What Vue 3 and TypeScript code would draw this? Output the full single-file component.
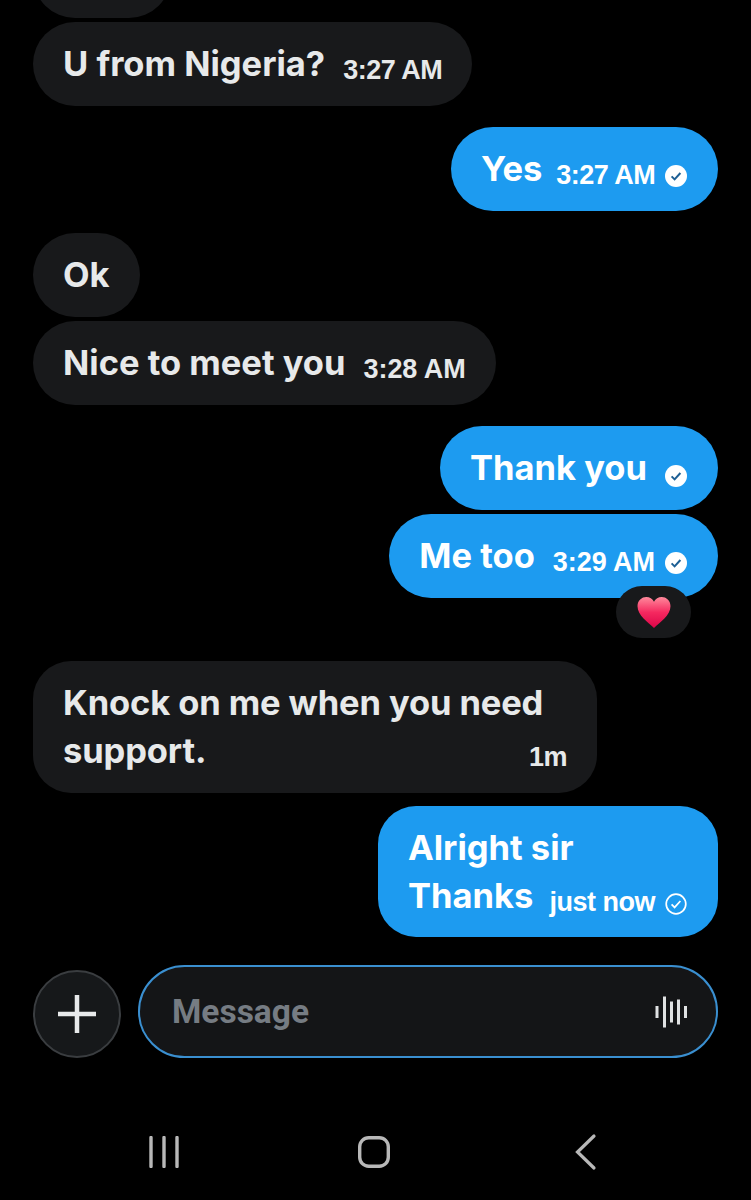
<script setup lang="ts">
interface Message {
  id: number;
  side: 'in' | 'out';
  lines: string[];
  time?: string;
  check?: 'read' | 'sent';
  cls?: string;
  reaction?: boolean;
}

const messages: Message[] = [
  { id: 0, side: 'in', lines: ['\u00a0'], cls: 'cut' },
  { id: 1, side: 'in', lines: ['U from Nigeria?'], time: '3:27 AM' },
  { id: 2, side: 'out', lines: ['Yes'], time: '3:27 AM', check: 'read', cls: 'new-group yes' },
  { id: 3, side: 'in', lines: ['Ok'], cls: 'new-group ok' },
  { id: 4, side: 'in', lines: ['Nice to meet you'], time: '3:28 AM', cls: 'wide' },
  { id: 5, side: 'out', lines: ['Thank you'], check: 'read', cls: 'new-group' },
  { id: 6, side: 'out', lines: ['Me too'], time: '3:29 AM', check: 'read', reaction: true, cls: 'wide' },
  { id: 7, side: 'in', lines: ['Knock on me when you need', 'support.'], time: '1m', cls: 'knock' },
  { id: 8, side: 'out', lines: ['Alright sir', 'Thanks'], time: 'just now', check: 'sent', cls: 'alright' },
];

const wave = [
  { x: 2, h: 12 },
  { x: 9.5, h: 31 },
  { x: 16.5, h: 21 },
  { x: 23.5, h: 25 },
  { x: 30.5, h: 12 },
];
</script>

<template>
  <div class="screen">
    <div class="thread">
      <div
        v-for="m in messages"
        :key="m.id"
        class="bubble"
        :class="[m.side, m.cls, { multi: m.lines.length > 1 }]"
      >
        <div v-if="m.lines.length > 1" class="first-line">{{ m.lines[0] }}</div>
        <div class="last-line">
          <span class="text">{{ m.lines[m.lines.length - 1] }}</span>
          <span v-if="m.time || m.check" class="meta">
            <span v-if="m.time" class="time">{{ m.time }}</span>
            <svg v-if="m.check === 'read'" class="check" viewBox="0 0 22 22">
              <circle cx="11" cy="11" r="11" fill="#fff" />
              <path d="M6.6 11.4l3 3 5.8-6.4" fill="none" stroke="#1d5f94" stroke-width="2" />
            </svg>
            <svg v-if="m.check === 'sent'" class="check" viewBox="0 0 22 22">
              <circle cx="11" cy="11" r="9.8" fill="none" stroke="#fff" stroke-width="1.7" />
              <path d="M6.6 11.4l3 3 5.8-6.4" fill="none" stroke="#fff" stroke-width="1.7" />
            </svg>
          </span>
        </div>
        <div v-if="m.reaction" class="reaction">
          <svg width="36" height="33" viewBox="0 0 36 34">
            <defs>
              <linearGradient id="heart" x1="0" y1="0" x2="0" y2="1">
                <stop offset="0" stop-color="#ff8a9c" />
                <stop offset="0.5" stop-color="#f5285f" />
                <stop offset="1" stop-color="#dc0548" />
              </linearGradient>
            </defs>
            <path
              d="M18 33C12 27 1 20 1 10.500C1 4.500 5.500 1 10 1C13.500 1 16.500 3 18 6C19.500 3 22.500 1 26 1C30.500 1 35 4.500 35 10.500C35 20 24 27 18 33Z"
              fill="url(#heart)"
            />
          </svg>
        </div>
      </div>
    </div>

    <div class="composer">
      <button class="plus" type="button">
        <svg width="40" height="40" viewBox="0 0 40 40">
          <path d="M20 1v38M1 20h38" stroke="#e7e9ea" stroke-width="4.500" />
        </svg>
      </button>
      <div class="input">
        <span class="placeholder">Message</span>
        <svg width="33" height="32" viewBox="0 0 33 32">
          <rect
            v-for="b in wave"
            :key="b.x"
            :x="b.x - 1.5"
            :y="16 - b.h / 2"
            width="3"
            :height="b.h"
            fill="#e0e2e3"
          />
        </svg>
      </div>
    </div>

    <div class="navbar">
      <svg width="32" height="32" viewBox="0 0 32 32">
        <path d="M3 1.500v29M16 1.500v29M29 1.500v29" stroke="#b8b8b8" stroke-width="3.400" stroke-linecap="round" />
      </svg>
      <svg width="32" height="32" viewBox="0 0 32 32">
        <rect x="1.700" y="1.700" width="28.600" height="28.600" rx="9" fill="none" stroke="#b8b8b8" stroke-width="3.400" />
      </svg>
      <svg width="30" height="38" viewBox="0 0 30 38">
        <path d="M26 3L9.500 19 26 35" fill="none" stroke="#b8b8b8" stroke-width="3.200" stroke-linecap="round" />
      </svg>
    </div>
  </div>
</template>

<style scoped>
.screen {
  width: 751px;
  height: 1200px;
  background: #000;
  overflow: hidden;
  font-family: Inter, "Liberation Sans", sans-serif;
  display: flex;
  flex-direction: column;
}

.thread {
  display: flex;
  flex-direction: column;
  gap: 4px;
  padding: 0 33px;
}

.bubble {
  position: relative;
  box-sizing: border-box;
  height: 84px;
  padding: 0 30px 2px 30px;
  border-radius: 42px;
  display: flex;
  flex-direction: column;
  justify-content: center;
  font-size: 34.5px;
  font-weight: 700;
  white-space: nowrap;
}

.in {
  align-self: flex-start;
  background: #18191b;
  color: #e7e9ea;
}

.out {
  align-self: flex-end;
  background: #1d9bf0;
  color: #fff;
  padding-right: 31px;
}

.cut {
  width: 138px;
  margin-top: -66px;
}

.new-group {
  margin-top: 17px;
}

.ok {
  margin-top: 18px;
}

.yes {
  width: 267px;
}

.yes .meta {
  margin-left: 14px;
}

.last-line {
  display: flex;
  align-items: baseline;
  justify-content: space-between;
}

.meta {
  display: inline-flex;
  align-items: center;
  gap: 10px;
  margin-left: 18px;
  position: relative;
  top: 3px;
  line-height: 1;
}

.time {
  font-family: "Liberation Sans", Arial, sans-serif;
  font-size: 27px;
  font-weight: 700;
  letter-spacing: -0.5px;
}

.wide .time {
  letter-spacing: -0.05px;
}

.check {
  width: 22px;
  height: 22px;
  position: relative;
  top: 1px;
}

/* no time next to it, so the svg bottom is what sits on the baseline */
.check:first-child {
  top: 4px;
}

.multi {
  height: auto;
  padding-top: 18px;
  padding-bottom: 18px;
  border-radius: 38px;
  line-height: 48px;
}

.knock {
  margin-top: 59px;
  width: 564px;
  letter-spacing: -0.12px;
}

.alright {
  margin-top: 9px;
  width: 340px;
  padding-bottom: 17px;
}

.alright .meta {
  margin-left: 16px;
}

.reaction {
  position: absolute;
  right: 27px;
  top: 72px;
  width: 75px;
  height: 52px;
  border-radius: 26px;
  background: #18191b;
  display: flex;
  align-items: center;
  justify-content: center;
}

.composer {
  display: flex;
  align-items: flex-end;
  gap: 17px;
  padding: 0 33px;
  margin-top: 28px;
}

.plus {
  box-sizing: border-box;
  width: 88px;
  height: 88px;
  flex: none;
  padding: 0;
  border-radius: 50%;
  border: 2px solid #3a3d40;
  background: #16181a;
  display: flex;
  align-items: center;
  justify-content: center;
}

.input {
  flex: 1;
  height: 93px;
  box-sizing: border-box;
  border: 2px solid #3a8fd0;
  border-radius: 47px;
  background: #141517;
  display: flex;
  align-items: center;
  justify-content: space-between;
  padding: 0 28px 0 32px;
}

.placeholder {
  font-family: Roboto, "Liberation Sans", sans-serif;
  font-size: 33.5px;
  font-weight: 700;
  color: #767c83;
}

.navbar {
  display: flex;
  align-items: center;
  justify-content: space-between;
  padding: 0 153px 0 148px;
  margin-top: 75px;
}
</style>

<style>
html,
body {
  background: #000;
}
</style>
